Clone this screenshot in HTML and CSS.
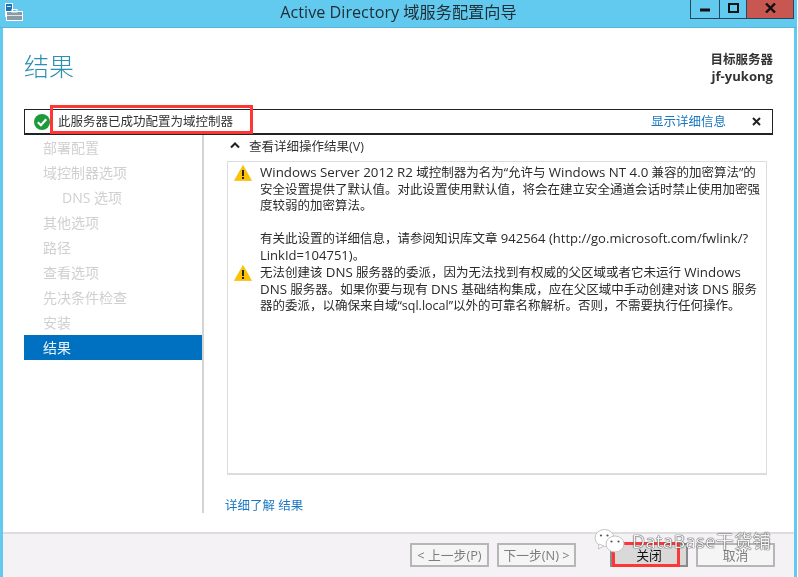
FILE: index.html
```html
<!DOCTYPE html>
<html lang="zh">
<head>
<meta charset="utf-8">
<title>Active Directory 域服务配置向导</title>
<link rel="stylesheet" href="styles.css">
</head>
<body>
<div class="window">
  <header class="titlebar">
    <svg class="app-icon" width="18" height="18" viewBox="0 0 18 18">
      <rect x="0.5" y="0.5" width="7" height="13" fill="#1f6fb5" stroke="#fff"/>
      <rect x="2" y="3" width="4" height="1" fill="#cfe8f7"/>
      <rect x="1.5" y="8.5" width="16" height="9" fill="#8a9aa6" stroke="#fff"/>
      <rect x="7" y="6.5" width="5" height="2.5" fill="none" stroke="#fff"/>
      <rect x="2" y="12" width="15" height="1" fill="#dfe6ea"/>
    </svg>
    <h1 class="title">Active Directory 域服务配置向导</h1>
    <div class="controls">
      <div class="ctl ctl-min"><svg width="10" height="4" viewBox="0 0 10 4"><rect width="10" height="3" y="0.5" fill="#111"/></svg></div>
      <div class="ctl ctl-max"><svg width="11" height="10" viewBox="0 0 11 10"><rect x="1" y="1" width="9" height="8" fill="none" stroke="#111" stroke-width="2"/></svg></div>
      <div class="ctl ctl-close"><svg width="11" height="10" viewBox="0 0 11 10"><path d="M1 0.5L10 9.5M10 0.5L1 9.5" stroke="#111" stroke-width="2.4"/></svg></div>
    </div>
  </header>

  <div class="client">
    <div class="head">
      <h2 class="page-title">结果</h2>
      <div class="target"><div>目标服务器</div><div class="target-name">jf-yukong</div></div>
    </div>

    <div class="notice">
      <svg class="ok-icon" width="16" height="16" viewBox="0 0 16 16">
        <circle cx="8" cy="8" r="8" fill="#1f9a3a"/>
        <path d="M3.800 8.200L6.900 11.200L12.200 5.200" fill="none" stroke="#fff" stroke-width="2.200"/>
      </svg>
      <span class="notice-text">此服务器已成功配置为域控制器</span>
      <a class="link notice-link">显示详细信息</a>
      <svg class="notice-x" width="9" height="9" viewBox="0 0 9 9"><path d="M1 1L8 8M8 1L1 8" stroke="#222" stroke-width="2"/></svg>
      <div class="redmark redmark-notice"></div>
    </div>

    <div class="body">
      <nav class="nav">
        <div class="nav-item">部署配置</div>
        <div class="nav-item">域控制器选项</div>
        <div class="nav-item nav-sub">DNS 选项</div>
        <div class="nav-item">其他选项</div>
        <div class="nav-item">路径</div>
        <div class="nav-item">查看选项</div>
        <div class="nav-item">先决条件检查</div>
        <div class="nav-item">安装</div>
        <div class="nav-item nav-active">结果</div>
      </nav>
      <section class="panel">
        <div class="expander">
          <svg width="10" height="7" viewBox="0 0 10 7"><path d="M1 5.500L5 1.500L9 5.500" fill="none" stroke="#222" stroke-width="2"/></svg>
          <span>查看详细操作结果(V)</span>
        </div>
        <div class="results">
          <div class="msg">
            <svg class="warn" width="18" height="16" viewBox="0 0 18 16"><path d="M9 0.500L17.500 15.500H0.500Z" fill="#fdc300" stroke="#f0b400" stroke-width="0.600"/><rect x="8" y="5" width="2" height="6" fill="#222"/><rect x="8" y="12" width="2" height="2" fill="#222"/></svg>
            <p><span class="lat">Windows Server 2012 R2</span> 域控制器为名为“允许与 <span class="lat">Windows NT 4.0</span> 兼容的加密算法”的<br>安全设置提供了默认值。对此设置使用默认值，将会在建立安全通道会话时禁止使用加密强<br>度较弱的加密算法。<br><br>有关此设置的详细信息，请参阅知识库文章 <span class="url">942564 (http://go.microsoft.com/fwlink/?</span><br><span class="url">LinkId=104751)</span>。</p>
          </div>
          <div class="msg">
            <svg class="warn" width="18" height="16" viewBox="0 0 18 16"><path d="M9 0.500L17.500 15.500H0.500Z" fill="#fdc300" stroke="#f0b400" stroke-width="0.600"/><rect x="8" y="5" width="2" height="6" fill="#222"/><rect x="8" y="12" width="2" height="2" fill="#222"/></svg>
            <p>无法创建该 <span class="lat">DNS</span> 服务器的委派，因为无法找到有权威的父区域或者它未运行 <span class="lat">Windows</span><br><span class="lat">DNS</span> 服务器。如果你要与现有 <span class="lat">DNS</span> 基础结构集成，应在父区域中手动创建对该 <span class="lat">DNS</span> 服务<br>器的委派，以确保来自域“sql.local”以外的可靠名称解析。否则，不需要执行任何操作。</p>
          </div>
        </div>
        <a class="link more">详细了解 结果</a>
      </section>
    </div>

    <footer class="footer">
      <div class="btn btn-off">&lt; 上一步(P)</div>
      <div class="btn btn-off">下一步(N) &gt;</div>
      <div class="btn btn-close">关闭<div class="redmark redmark-btn"></div></div>
      <div class="btn btn-off">取消</div>
      <div class="watermark">
        <svg width="31" height="24" viewBox="0 0 31 24">
          <ellipse cx="10.500" cy="9" rx="9.500" ry="8.500" fill="#fff" stroke="#c4c4c4"/>
          <path d="M5 15L4.500 20L10 17Z" fill="#fff" stroke="#c4c4c4"/>
          <ellipse cx="21" cy="15" rx="9" ry="8" fill="#fff" stroke="#c4c4c4"/>
          <circle cx="7" cy="6.500" r="1.100" fill="#555"/><circle cx="13.500" cy="6.500" r="1.100" fill="#555"/>
          <circle cx="17.500" cy="12.500" r="1.100" fill="#555"/><circle cx="24.500" cy="12.500" r="1.100" fill="#555"/>
        </svg>
        <span>DataBase干货铺</span>
      </div>
    </footer>
  </div>
</div>
</body>
</html>
```

FILE: styles.css
```css
* { box-sizing: border-box; }
html, body { margin: 0; padding: 0; background: #fff; }
body {
  width: 798px;
  height: 577px;
  overflow: hidden;
  font-family: "Open Sans", "Noto Sans CJK SC", sans-serif;
  font-size: 12.5px;
  color: #222;
}
.window {
  width: 797px;
  height: 577px;
  background: #62c9ef;
  display: flex;
  flex-direction: column;
  padding: 0 3px;
  filter: blur(0.3px);
}
.titlebar {
  height: 28px;
  flex: none;
  margin: 0 -3px;
  border-bottom: 1px solid #58b5d8;
  position: relative;
  display: flex;
  align-items: flex-start;
}
.app-icon { position: absolute; left: 5px; top: 3px; }
.title {
  margin: 0;
  width: 100%;
  text-align: center;
  font-size: 16.2px;
  font-weight: 400;
  line-height: 25px;
  color: #1f2d35;
}
.controls {
  position: absolute;
  right: 3px;
  top: 0;
  display: flex;
  height: 19px;
  border: 1px solid #24485a;
  border-top: 0;
}
.ctl { display: flex; align-items: center; justify-content: center; padding-bottom: 1px; }
.ctl-min { width: 29px; border-right: 1px solid #24485a; padding-top: 3px; }
.ctl-max { width: 27px; border-right: 1px solid #24485a; padding-bottom: 3px; }
.ctl-close { width: 46px; background: #c75750; padding-bottom: 3px; }

.client {
  flex: 1;
  min-height: 0;
  background: #fff;
  display: flex;
  flex-direction: column;
}
.head {
  height: 81px;
  flex: none;
  padding: 0 21px;
  display: flex;
  justify-content: space-between;
}
.page-title {
  margin: 18px 0 0;
  font-size: 25px;
  font-weight: 300;
  line-height: 40px;
  color: #2b8fb3;
}
.target {
  margin-top: 24px;
  text-align: right;
  font-weight: 700;
  line-height: 16px;
  color: #333;
}
.target-name { font-size: 13.1px; }
.notice {
  flex: none;
  margin: 0 21px;
  height: 26px;
  border: 1px solid #222;
  border-bottom-width: 2px;
  position: relative;
  display: flex;
  align-items: center;
  padding: 0 11px 0 9px;
  color: #333;
}
.ok-icon { flex: none; margin-right: 8px; }
.notice-text { flex: 1; margin-bottom: 2px; }
.notice-link { margin-right: 26px; margin-bottom: 2px; }
.notice-x { flex: none; }
.link { color: #1a78c2; }
.redmark { position: absolute; border: 3px solid #ff3636; pointer-events: none; }
.redmark-notice { left: 25px; top: -5px; width: 203px; height: 29px; }

.body {
  flex: 1;
  min-height: 0;
  display: flex;
}
.nav {
  width: 201px;
  flex: none;
  padding: 0 0 0 21px;
  border-right: 2px solid #d4d4d4;
  color: #d0d0d0;
  font-size: 14px;
  height: 378px;
}
.nav-item { height: 25px; line-height: 25px; padding-left: 19px; }
.nav-sub { padding-left: 38px; }
.nav-active { background: #0070c0; color: #e8f2fa; width: 178px; }
.panel {
  flex: 1;
  min-width: 0;
  padding-left: 23px;
  height: 378px;
}
.expander {
  display: flex;
  align-items: center;
  height: 26px;
  padding: 0 0 6px 3px;
  gap: 9px;
  color: #333;
}
.results {
  width: 540px;
  height: 314px;
  border: 1px solid #dcdcdc;
  border-bottom-width: 2px;
  padding: 3px 6px 0;
  color: #2a2a2a;
  line-height: 16.5px;
}
.msg { display: flex; gap: 8px; margin-bottom: 1px; }
.msg p { margin: 0; white-space: nowrap; }
.lat { font-size: 13.3px; line-height: 1; }
.url { font-size: 13.05px; line-height: 1; }
.warn { flex: none; }
.more { display: block; margin: 23px 0 0 -2px; line-height: 16px; }

.footer {
  flex: none;
  height: 45px;
  background: #f5f2f6;
  border-top: 2px solid #dedcdf;
  display: flex;
  padding: 9px 0 0 407px;
  gap: 8px;
  position: relative;
}
.btn {
  width: 79px;
  height: 24px;
  border: 2px solid #b6b6b6;
  background: #f5f5f5;
  text-align: center;
  line-height: 20px;
  font-size: 12.8px;
  color: #7d7d7d;
  position: relative;
}
.btn-close {
  margin-left: 26px;
  width: 78px;
  background: #d9d9d9;
  border-color: #8a8a8a;
  color: #111;
}
.redmark-btn { left: 0; top: -3px; width: 68px; height: 25px; }
.watermark {
  position: absolute;
  left: 591px;
  top: -5px;
  display: flex;
  align-items: flex-start;
  gap: 7px;
  color: #f4f4f4;
  font-size: 18px;
  line-height: 24px;
  letter-spacing: 0.5px;
  text-shadow: 0 0 1px #222, 0 0 1px #222;
}
```
